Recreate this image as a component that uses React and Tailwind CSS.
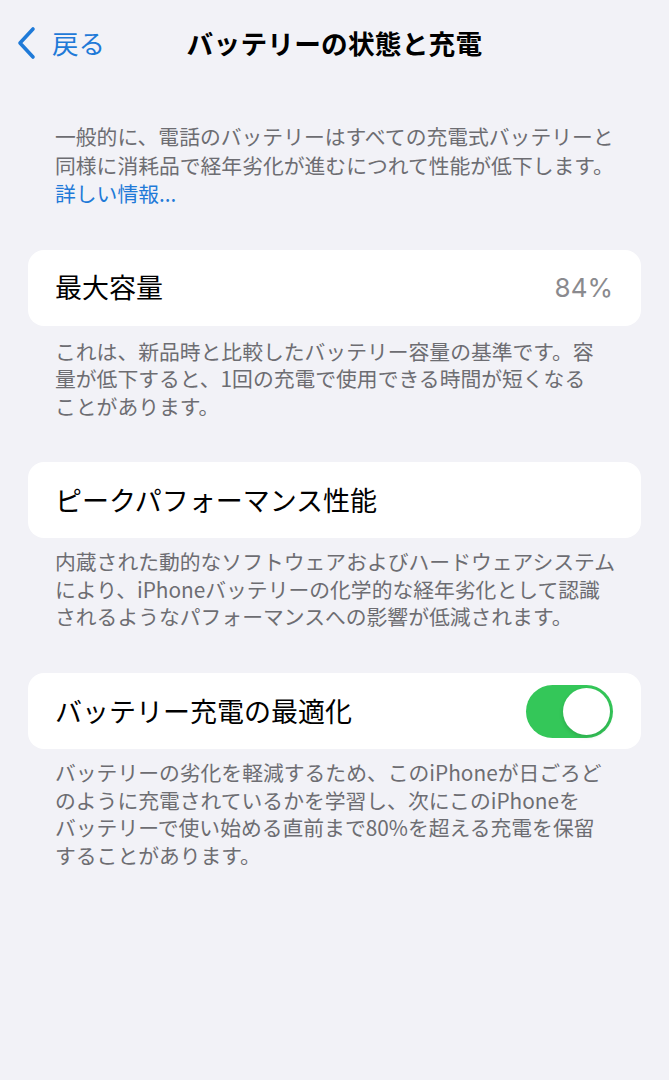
import React from "react";

const FONT = { fontFamily: '"Noto Sans CJK JP", "Noto Sans", sans-serif' };

function Footnote({ lines, className = "" }) {
  return (
    <div className={"px-[55px] text-[20.8px] leading-[27.6px] text-[#6d6d72] " + className}>
      {lines.map((l, i) => (
        <div key={i} className="whitespace-nowrap">{l}</div>
      ))}
    </div>
  );
}

function Card({ children, className = "" }) {
  return (
    <div className={"mx-[28px] h-[76px] rounded-[16px] bg-white pl-[27px] pr-[28px] flex items-center justify-between " + className}>
      {children}
    </div>
  );
}

export default function App() {
  return (
    <div className="min-h-[1080px] w-full bg-[#f2f2f7] text-black" style={FONT}>
      <div className="h-[86px] grid grid-cols-[1fr_auto_1fr] items-center">
        <div className="flex items-center pl-[15px] gap-[15px] text-[#1f7ad8]">
          <svg width="22" height="34" viewBox="0 0 22 34" fill="none">
            <path d="M18 3 L5 17 L18 31" stroke="#1f7ad8" strokeWidth="3.6" strokeLinecap="round" strokeLinejoin="round" />
          </svg>
          <span className="text-[26.5px] leading-none">戻る</span>
        </div>
        <div className="text-[26.7px] font-bold leading-none tracking-[0.2px]">バッテリーの状態と充電</div>
        <div />
      </div>

      <div className="mt-[36px] px-[55px] text-[20.8px] leading-[28.5px] text-[#6d6d72]">
        <div className="whitespace-nowrap">一般的に、電話のバッテリーはすべての充電式バッテリーと</div>
        <div className="whitespace-nowrap">同様に消耗品で経年劣化が進むにつれて性能が低下します。</div>
        <div className="whitespace-nowrap text-[#1f7ad8]">詳しい情報...</div>
      </div>

      <Card className="mt-[42px]">
        <span className="text-[27px]">最大容量</span>
        <span className="text-[26px] text-[#8a8a8e]" style={{ fontFamily: '"Inter", "Noto Sans", sans-serif' }}>84%</span>
      </Card>
      <Footnote
        className="mt-[12px]"
        lines={[
          "これは、新品時と比較したバッテリー容量の基準です。容",
          "量が低下すると、1回の充電で使用できる時間が短くなる",
          "ことがあります。",
        ]}
      />

      <Card className="mt-[42px]">
        <span className="text-[27px]">ピークパフォーマンス性能</span>
      </Card>
      <Footnote
        className="mt-[10px]"
        lines={[
          "内蔵された動的なソフトウェアおよびハードウェアシステム",
          "により、iPhoneバッテリーの化学的な経年劣化として認識",
          "されるようなパフォーマンスへの影響が低減されます。",
        ]}
      />

      <Card className="mt-[42px]">
        <span className="text-[27px]">バッテリー充電の最適化</span>
        <div className="w-[87px] h-[53px] rounded-full bg-[#34c759] p-[3px] flex justify-end">
          <div className="w-[47px] h-[47px] rounded-full bg-white shadow-[0_2px_4px_rgba(0,0,0,0.15)]" />
        </div>
      </Card>
      <Footnote
        className="mt-[10px]"
        lines={[
          "バッテリーの劣化を軽減するため、このiPhoneが日ごろど",
          "のように充電されているかを学習し、次にこのiPhoneを",
          "バッテリーで使い始める直前まで80%を超える充電を保留",
          "することがあります。",
        ]}
      />
    </div>
  );
}
